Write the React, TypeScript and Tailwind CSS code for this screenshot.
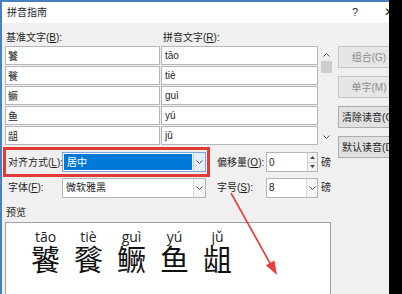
const rows = [
  ["饕", "tāo"],
  ["餮", "tiè"],
  ["鳜", "guì"],
  ["鱼", "yú"],
  ["龃", "jǔ"],
]

const Key = ({ k }: { k: string }) => <span className="underline underline-offset-1">{k}</span>

const Chevron = ({ up = false }: { up?: boolean }) => (
  <svg width="7" height="4" viewBox="0 0 7 4" fill="none" stroke="#555" strokeWidth="1" className={up ? "rotate-180" : ""}>
    <path d="M0.5 0.5 3.5 3.5 6.5 0.5" />
  </svg>
)

const Button = ({ label, disabled = false }: { label: string; disabled?: boolean }) => (
  <div
    className={
      disabled
        ? "w-[62px] h-[22px] shrink-0 flex items-center justify-center whitespace-nowrap bg-[#e6e6e6] border border-[#c6c6c6] text-[#8c8c8c]"
        : "w-[62px] h-[22px] shrink-0 flex items-center justify-center whitespace-nowrap bg-[#e1e1e1] border border-[#adadad] text-[#1e1e1e]"
    }
  >
    {label}
  </div>
)

function App(): React.ReactElement {
  return (
    <div className="relative flex w-[402px] h-[294px] overflow-hidden whitespace-nowrap font-['Liberation_Sans','Noto_Sans_CJK_SC',sans-serif] text-[10px] leading-[13px] text-[#1e1e1e]">
      <div className="flex flex-col w-[389px] shrink-0 overflow-hidden border-l-2 border-t-2 border-[#4a80bf]">
        {/* title bar */}
        <div className="h-[21px] shrink-0 bg-white flex items-center">
          <span className="ml-[5px] w-[345px] shrink-0">拼音指南</span>
          <span className="w-[32px] shrink-0 text-[11px]">?</span>
          <span className="shrink-0 text-[12px]">✕</span>
        </div>

        <div className="flex-1 flex bg-[#f0f0f0]">
          <div className="w-[331px] shrink-0 flex flex-col">
            <div className="h-[23px] shrink-0 flex pt-[8px]">
              <span className="ml-[4px] w-[157px]">基准文字(<Key k="B" />):</span>
              <span>拼音文字(<Key k="R" />):</span>
            </div>

            <div className="h-[99px] shrink-0 flex">
              <div className="ml-[3px] w-[313px] grid grid-cols-[155px_157px] gap-[1px]">
                {rows.map(([c, p]) => [
                  <div key={c} className="h-[19px] bg-white border border-[#b4b6bc] flex items-center pl-[2px] font-['Noto_Sans_CJK_SC',sans-serif]">{c}</div>,
                  <div key={p} className="h-[19px] bg-white border border-[#b4b6bc] flex items-center pl-[3px]">{p}</div>,
                ])}
              </div>
              <div className="ml-[2px] w-[13px] flex flex-col items-center">
                <div className="mt-[7px]"><Chevron up /></div>
                <div className="mt-[4px] w-[11px] h-[12px] bg-[#cdcdcd]" />
                <div className="mt-auto mb-[6px]"><Chevron /></div>
              </div>
            </div>

            {/* alignment row */}
            <div className="mt-[2px] h-[30px] shrink-0 flex items-center">
              <div className="ml-[1px] w-[207px] h-[30px] border-[3px] border-[#e23a35] flex items-center">
                <span className="pl-[2px] w-[56px] shrink-0">对齐方式(<Key k="L" />):</span>
                <div className="w-[144px] h-[20px] flex bg-white border border-[#7aa7d6]">
                  <div className="flex-1 p-[1px]">
                    <div className="h-full bg-[#0078d7] text-white pl-[3px] flex items-center">居中</div>
                  </div>
                  <div className="w-[12px] flex items-center justify-center bg-[#e5eef8] border-l border-[#b9cde5]">
                    <Chevron />
                  </div>
                </div>
              </div>
              <span className="ml-[7px] w-[49px] shrink-0">偏移量(<Key k="O" />):</span>
              <div className="w-[52px] h-[20px] flex bg-white border border-[#b4b6bc]">
                <span className="flex-1 pl-[2px] flex items-center">0</span>
                <div className="w-[10px] flex flex-col border-l border-[#d0d0d0] bg-[#f3f3f3]">
                  <div className="flex-1 flex items-center justify-center border-b border-[#d0d0d0]">
                    <svg width="5" height="3" viewBox="0 0 5 3"><path d="M0 3 2.5 0 5 3z" fill="#444" /></svg>
                  </div>
                  <div className="flex-1 flex items-center justify-center">
                    <svg width="5" height="3" viewBox="0 0 5 3"><path d="M0 0 2.5 3 5 0z" fill="#444" /></svg>
                  </div>
                </div>
              </div>
              <span className="ml-[3px]">磅</span>
            </div>

            {/* font row */}
            <div className="h-[21px] shrink-0 flex items-center">
              <span className="ml-[6px] w-[54px] shrink-0">字体(<Key k="F" />):</span>
              <div className="w-[144px] h-[20px] flex bg-white border border-[#b4b6bc]">
                <span className="flex-1 pl-[3px] flex items-center">微软雅黑</span>
                <div className="w-[12px] flex items-center justify-center border-l border-[#d9d9d9] bg-[#f5f5f5]">
                  <Chevron />
                </div>
              </div>
              <span className="ml-[11px] w-[49px] shrink-0">字号(<Key k="S" />):</span>
              <div className="w-[52px] h-[20px] flex bg-white border border-[#b4b6bc]">
                <span className="flex-1 pl-[2px] flex items-center">8</span>
                <div className="w-[11px] flex items-center justify-center border-l border-[#d9d9d9] bg-[#f5f5f5]">
                  <Chevron />
                </div>
              </div>
              <span className="ml-[3px]">磅</span>
            </div>

            <span className="mt-[8px] ml-[4px]">预览</span>

            <div className="mt-[3px] ml-[3px] w-[326px] flex-1 flex bg-white border border-b-0 border-[#a0a0a0] pt-[7px] pl-[18px]">
              {rows.map(([c, p]) => (
                <div key={c} className="w-[43px] flex flex-col items-center">
                  <span className="text-[14px] leading-[14px] font-['Open_Sans',sans-serif]">{p}</span>
                  <span className="text-[29px] leading-[29px] text-[#111] font-['Noto_Sans_CJK_SC',sans-serif]">{c}</span>
                </div>
              ))}
            </div>
          </div>

          <div className="ml-[5px] pt-[23px] flex flex-col gap-[8px]">
            <Button label="组合(G)" disabled />
            <Button label="单字(M)" disabled />
            <Button label="清除读音(C)" />
            <Button label="默认读音(D)" />
          </div>
        </div>
      </div>
      <div className="w-[13px] shrink-0 bg-black" />

      <svg className="absolute inset-0 pointer-events-none" width="402" height="294" viewBox="0 0 402 294">
        <line x1="231" y1="193" x2="271" y2="265" stroke="#e5403a" strokeWidth="1.6" />
        <path d="M277 275 265.8 265.3 274.5 260.4z" fill="#e5403a" />
      </svg>
    </div>
  )
}

export default App
